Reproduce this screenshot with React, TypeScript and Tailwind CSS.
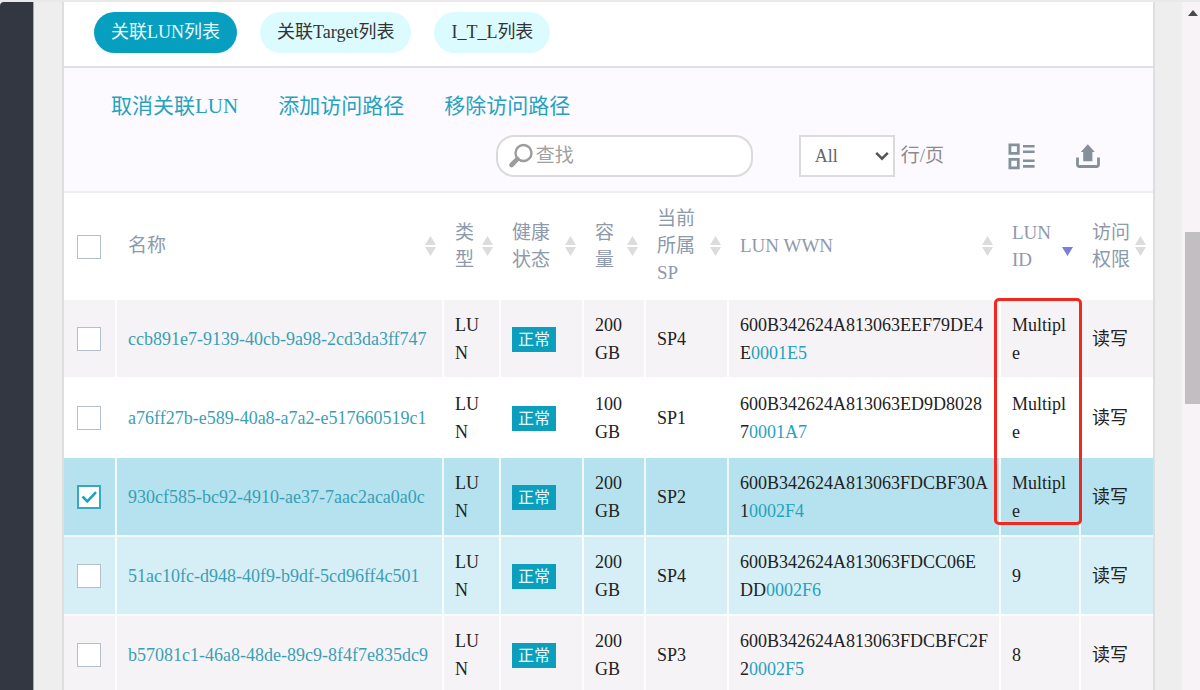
import { useState } from 'react'
import clsx from 'clsx'

type Lun = {
  id: string
  capacity: string
  sp: string
  wwn: string[]
  wwnTail: string
  lunId: string
}

const luns: Lun[] = [
  { id: 'ccb891e7-9139-40cb-9a98-2cd3da3ff747', capacity: '200 GB', sp: 'SP4', wwn: ['600B342624A813063EEF79DE4', 'E'], wwnTail: '0001E5', lunId: 'Multiple' },
  { id: 'a76ff27b-e589-40a8-a7a2-e517660519c1', capacity: '100 GB', sp: 'SP1', wwn: ['600B342624A813063ED9D8028', '7'], wwnTail: '0001A7', lunId: 'Multiple' },
  { id: '930cf585-bc92-4910-ae37-7aac2aca0a0c', capacity: '200 GB', sp: 'SP2', wwn: ['600B342624A813063FDCBF30A', '1'], wwnTail: '0002F4', lunId: 'Multiple' },
  { id: '51ac10fc-d948-40f9-b9df-5cd96ff4c501', capacity: '200 GB', sp: 'SP4', wwn: ['600B342624A813063FDCC06E', 'DD'], wwnTail: '0002F6', lunId: '9' },
  { id: 'b57081c1-46a8-48de-89c9-8f4f7e835dc9', capacity: '200 GB', sp: 'SP3', wwn: ['600B342624A813063FDCBFC2F', '2'], wwnTail: '0002F5', lunId: '8' },
]

const hoveredId = '51ac10fc-d948-40f9-b9df-5cd96ff4c501'

const columns = [
  { label: '名称', width: '' },
  { label: '类型', width: 'w-[57px]' },
  { label: '健康状态', width: 'w-[83px]' },
  { label: '容量', width: 'w-[62px]' },
  { label: '当前所属SP', width: 'w-[83px]' },
  { label: 'LUN WWN', width: 'w-[272px]' },
  { label: 'LUN ID', width: 'w-[80px]', sorted: true },
  { label: '访问权限', width: 'w-[72px]' },
]

const tabs = ['关联LUN列表', '关联Target列表', 'I_T_L列表']
const actions = ['取消关联LUN', '添加访问路径', '移除访问路径']

function SortIcon({ sorted }: { sorted?: boolean }) {
  return (
    <svg viewBox="0 0 11 20" className="w-[11px] h-5 shrink-0" aria-hidden="true">
      {sorted ? (
        <path d="M0 11h11L5.5 20z" fill="#7b7be0" />
      ) : (
        <path d="M5.5 0L11 9H0zM0 11h11L5.5 20z" fill="#dcdcdc" />
      )}
    </svg>
  )
}

function Checkbox({ label, checked, onChange }: { label: string; checked: boolean; onChange: () => void }) {
  return (
    <label className="relative block w-6 h-6">
      <input
        type="checkbox"
        aria-label={label}
        checked={checked}
        onChange={onChange}
        className="block w-6 h-6 appearance-none bg-white border border-[#b3c0cc] checked:border-2 checked:border-[#35a9c0]"
      />
      {checked && (
        <svg viewBox="0 0 24 24" className="absolute inset-0 w-6 h-6 pointer-events-none" fill="none" stroke="#1ba3bf" strokeWidth="2.6">
          <path d="M5.5 11.5l4.8 4.8L19 7.2" />
        </svg>
      )}
    </label>
  )
}

export default function App() {
  const [activeTab, setActiveTab] = useState(tabs[0])
  const [selected, setSelected] = useState<string[]>(['930cf585-bc92-4910-ae37-7aac2aca0a0c'])

  const toggle = (id: string) =>
    setSelected((prev) => (prev.includes(id) ? prev.filter((x) => x !== id) : [...prev, id]))

  const toggleAll = () => setSelected((prev) => (prev.length === luns.length ? [] : luns.map((l) => l.id)))

  const cell = 'pl-[11px] pr-[9px] pt-[11px] pb-2.5 border-r-2 border-b-2 border-white/80 break-all last:border-r-0'

  return (
    <div className="h-screen flex overflow-hidden border-t-2 border-[#e9e9e9] bg-[#eeeeee] text-lg leading-7 text-[#222] font-['Liberation_Serif','Noto_Sans_CJK_SC',serif]">
      <aside className="w-[34px] shrink-0 bg-[#323741] border-r border-[#a9a9a9] rounded-tl" />

      <main className="flex-1 min-w-0 ml-7 mr-[27px] bg-white border-x-2 border-[#dddee0]">
        <div className="flex items-center gap-[23px] h-[66px] pl-[30px] pb-1 border-b-2 border-[#dee2e5]">
          {tabs.map((tab) => (
            <button
              key={tab}
              type="button"
              onClick={() => setActiveTab(tab)}
              className={clsx(
                'h-[41px] px-[17px] rounded-full whitespace-nowrap',
                tab === activeTab ? 'bg-[#079fbf] text-[#e6fbff]' : 'bg-[#dcfbff] text-[#333]'
              )}
            >
              {tab}
            </button>
          ))}
        </div>

        {/* Barra de ações */}
        <div className="bg-[#fdfaff] border-b-2 border-[#f0edf0] pt-6 pb-3.5">
          <div className="flex gap-10 pl-[47px] text-[21px] text-[#27a2be]">
            {actions.map((action) => (
              <a key={action} href="#" className="whitespace-nowrap">{action}</a>
            ))}
          </div>

          <div className="flex items-center justify-end mt-[15px] pr-[53px] text-[19px] text-[#8b8b8b]">
            <label className="flex items-center w-[257px] h-[42px] pl-2.5 pr-4 mr-[46px] bg-white border-2 border-[#dadada] rounded-[18px]">
              <svg viewBox="0 0 26 26" className="w-[26px] h-[26px] shrink-0" fill="none" stroke="#9c9c9c" aria-hidden="true">
                <circle cx="15.5" cy="10" r="8" strokeWidth="2.4" />
                <path d="M9.3 16.2L3.5 22" strokeWidth="4.6" strokeLinecap="round" />
              </svg>
              <input
                type="search"
                aria-label="查找"
                placeholder="查找"
                className="flex-1 min-w-0 ml-0.5 bg-transparent outline-none placeholder:text-[#a0a0a0]"
              />
            </label>

            <label className="flex items-center gap-1.5 whitespace-nowrap">
              <span className="relative">
                <select className="block w-24 h-[42px] pl-3.5 appearance-none bg-white border-2 border-[#dcdadc] text-lg text-[#666]">
                  <option>All</option>
                  <option>10</option>
                  <option>20</option>
                </select>
                <svg viewBox="0 0 14 10" className="absolute right-1.5 top-4 w-3.5 h-2.5 pointer-events-none" fill="none" stroke="#555" strokeWidth="2.6">
                  <path d="M1.2 1.8L7 7.6l5.8-5.8" />
                </svg>
              </span>
              行/页
            </label>

            <button type="button" aria-label="列" className="ml-16">
              <svg viewBox="0 0 27 27" className="w-[27px] h-[27px]" fill="none" stroke="#84919b" strokeWidth="2.8">
                <path d="M1.9 1.9h8.4v8.4H1.9zM1.9 16.4h8.4v8.4H1.9z" />
                <path d="M15 3.2h11.6M15 8.8h11.6M15 17.8h11.6M15 23.4h11.6" strokeWidth="2.6" />
              </svg>
            </button>

            <button type="button" aria-label="导出" className="ml-[41px]">
              <svg viewBox="0 0 24 24" className="w-6 h-6" aria-hidden="true">
                <path d="M11.8.3L18.8 8h-2.4v9.2H7.2V8H4.8z" fill="#84919b" />
                <path d="M1.5 13.5v7.2a1.8 1.8 0 0 0 1.8 1.8h17.4a1.8 1.8 0 0 0 1.8-1.8v-7.2" fill="none" stroke="#84919b" strokeWidth="2.8" />
              </svg>
            </button>
          </div>
        </div>

        <table className="w-full table-fixed border-separate border-spacing-0">
          <thead>
            <tr className="text-[19px] leading-[27px] text-[#8e99ab]">
              <th className="w-[53px] pl-[13px]">
                <Checkbox label="全选" checked={selected.length === luns.length} onChange={toggleAll} />
              </th>
              {columns.map((col) => (
                <th key={col.label} className={clsx('pl-[11px] pr-2 pt-3 pb-3.5 text-left font-normal last:pr-[7px]', col.width)}>
                  <div className="flex items-center justify-between">
                    <span className="min-w-0">{col.label}</span>
                    <SortIcon sorted={col.sorted} />
                  </div>
                </th>
              ))}
            </tr>
          </thead>
          <tbody>
            {luns.map((lun, i) => {
              const checked = selected.includes(lun.id)
              return (
                <tr
                  key={lun.id}
                  className={clsx(
                    checked ? 'bg-[#b5e2ee]' : lun.id === hoveredId ? 'bg-[#d6eef6]' : i % 2 === 0 ? 'bg-[#f6f3f6]' : 'bg-white'
                  )}
                >
                  <td className="pl-[13px] border-r-2 border-b-2 border-white/80">
                    <Checkbox label={lun.id} checked={checked} onChange={() => toggle(lun.id)} />
                  </td>
                  <td className={clsx(cell, 'whitespace-nowrap')}>
                    <a href="#" className="text-[#3a9fb5]">{lun.id}</a>
                  </td>
                  <td className={cell}>LUN</td>
                  <td className={cell}>
                    <span className="block w-11 h-[25px] bg-[#0c9fbd] text-center text-base leading-[25px] text-[#e6fbff]">正常</span>
                  </td>
                  <td className={cell}>{lun.capacity}</td>
                  <td className={cell}>{lun.sp}</td>
                  <td className={clsx(cell, 'whitespace-nowrap')}>
                    {lun.wwn[0]}
                    <br />
                    {lun.wwn[1]}
                    <span className="text-[#27a2be]">{lun.wwnTail}</span>
                  </td>
                  <td className={clsx(cell, 'relative')}>
                    {lun.lunId}
                    {i === 0 && (
                      <span className="absolute z-10 -left-[7px] -top-0.5 w-[88px] h-[227px] border-[3px] border-[#f0281e] rounded-[5px] pointer-events-none" />
                    )}
                  </td>
                  <td className={cell}>读写</td>
                </tr>
              )
            })}
          </tbody>
        </table>
      </main>

      {/* Barra de rolagem */}
      <div className="w-[18px] shrink-0 flex flex-col bg-[#f7f3f7]">
        <svg viewBox="0 0 10 6" className="w-2.5 h-1.5 mt-2 ml-1.5" aria-hidden="true">
          <path d="M5 0l5 6H0z" fill="#4a4a4a" />
        </svg>
        <div className="ml-[3px] mt-[216px] h-[172px] bg-[#c1bfc2]" />
      </div>
    </div>
  )
}
